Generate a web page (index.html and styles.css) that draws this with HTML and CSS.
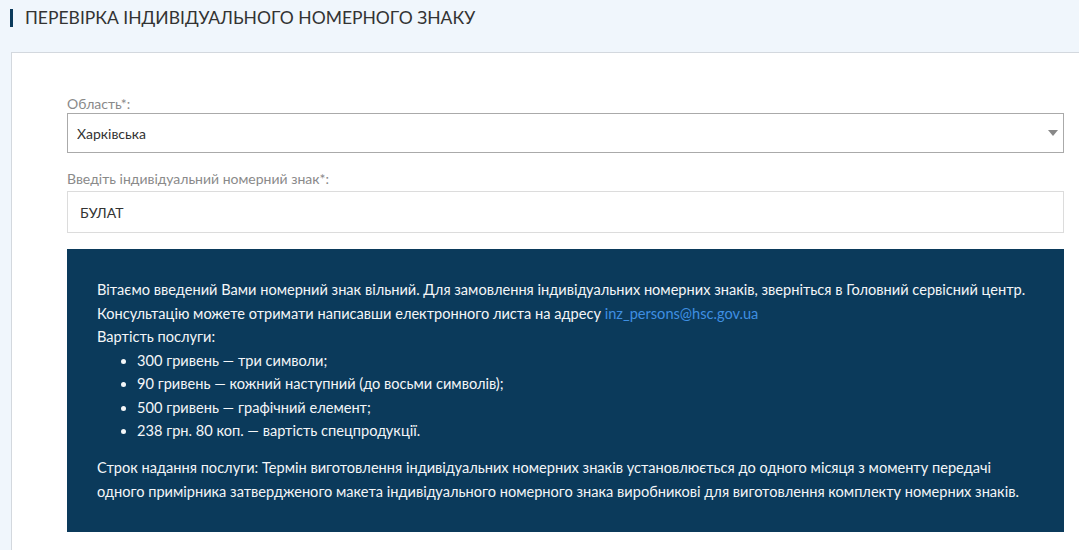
FILE: index.html
```html
<!DOCTYPE html>
<html lang="uk">
<head>
    <meta charset="UTF-8">
    <meta name="viewport" content="width=device-width, initial-scale=1.0">
    <title>Перевірка індивідуального номерного знаку</title>
    <link rel="stylesheet" href="styles.css">
</head>
<body>

    <!-- Page title -->
    <h1 class="page-title">Перевірка індивідуального номерного знаку</h1>

    <!-- Check form -->
    <div class="card">
        <form class="check-form">
            <label class="field-label" for="region">Область*:</label>
            <div class="select-wrap">
                <select id="region" class="field">
                    <option>Харківська</option>
                </select>
                <span class="select-arrow"></span>
            </div>

            <label class="field-label" for="plate">Введіть індивідуальний номерний знак*:</label>
            <input type="text" id="plate" class="field field-plate" value="БУЛАТ" />
        </form>

        <!-- Result -->
        <div class="result">
            <p>
                Вітаємо введений Вами номерний знак вільний. Для замовлення індивідуальних номерних знаків, зверніться в Головний сервісний центр.<br>
                Консультацію можете отримати написавши електронного листа на адресу <a href="#">inz_persons@hsc.gov.ua</a><br>
                Вартість послуги:
            </p>
            <ul>
                <li>300 гривень — три символи;</li>
                <li>90 гривень — кожний наступний (до восьми символів);</li>
                <li>500 гривень — графічний елемент;</li>
                <li>238 грн. 80 коп. — вартість спецпродукції.</li>
            </ul>
            <p class="term">
                Строк надання послуги: Термін виготовлення індивідуальних номерних знаків установлюється до одного місяця з моменту передачі одного примірника затвердженого макета індивідуального номерного знака виробникові для виготовлення комплекту номерних знаків.
            </p>
        </div>
    </div>

</body>
</html>
```

FILE: styles.css
```css
body {
    font-family: Lato, "Open Sans", sans-serif;
    margin: 0;
    padding: 0;
    background-color: #f0f6fc;
    overflow: hidden;
}
.page-title {
    margin: 0;
    padding: 9px 0 0 10px;
    height: 52px;
    box-sizing: border-box;
    display: flex;
    align-items: flex-start;
    font-size: 17.5px;
    font-weight: normal;
    line-height: 18px;
    text-transform: uppercase;
    color: #333;
}
.page-title::before {
    content: "";
    display: inline-block;
    flex-shrink: 0;
    width: 3px;
    height: 18px;
    margin-right: 12px;
    background-color: #0b3a5b;
}
.card {
    margin: 0 -12px 0 11px;
    padding: 42px 26px 40px 55px;
    background-color: white;
    border: 1px solid #d3d8de;
}
.check-form {
    display: flex;
    flex-direction: column;
}
.field-label {
    font-size: 14px;
    line-height: 18px;
    color: #8a8a8a;
}
.select-wrap {
    position: relative;
    margin-bottom: 17px;
}
.field {
    width: 100%;
    box-sizing: border-box;
    font-family: Lato, "Open Sans", sans-serif;
    font-size: 14px;
    color: #333;
    background-color: white;
    outline: none;
}
select.field {
    height: 40px;
    padding: 0 9px;
    border: 1px solid #aaa;
    border-radius: 0;
    appearance: none;
    -webkit-appearance: none;
}
.select-arrow {
    position: absolute;
    right: 6px;
    top: 17px;
    width: 0;
    height: 0;
    border-left: 5px solid transparent;
    border-right: 5px solid transparent;
    border-top: 6px solid #888;
}
.field-plate {
    height: 42px;
    margin-top: 3px;
    padding: 0 12px;
    border: 1px solid #dcdcdc;
}
.result {
    margin-top: 16px;
    padding: 29px 30px 29px 30px;
    background-color: #0b3a5b;
    color: #f4f6f8;
    font-size: 14.6px;
    line-height: 23.5px;
}
.result p {
    margin: 0;
}
.result a {
    color: #3f8fe2;
    text-decoration: none;
}
.result ul {
    margin: 0;
    padding-left: 40px;
}
.result .term {
    margin-top: 13.5px;
}
```
